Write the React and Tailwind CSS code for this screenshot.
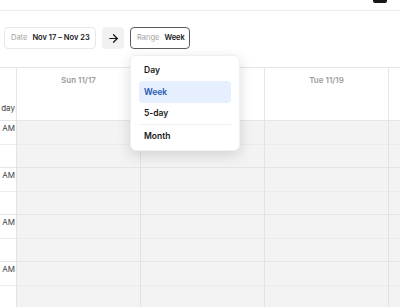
import {ArrowRight} from 'lucide-react';

const days = [
    {id: 'sun', label: 'Sun 11/17'},
    {id: 'mon', label: 'Mon 11/18'},
    {id: 'tue', label: 'Tue 11/19'},
    {id: 'wed', label: 'Wed 11/20'},
];

const hours = ['12 AM', '1 AM', '2 AM', '3 AM'];

const ranges = [
    {id: 'day', label: 'Day'},
    {id: 'week', label: 'Week'},
    {id: '5day', label: '5-day'},
    {id: 'month', label: 'Month'},
];

const App = () => {
    const active = 'week';

    return (
        <div className="relative w-[400px] h-[307px] overflow-hidden bg-white font-['Inter',sans-serif] text-neutral-900">
            <div className="h-[11px] flex justify-end pr-[13px] border-b border-[#ececec]">
                <div className="w-[14px] h-[3px] bg-neutral-900 rounded-b-[2px]"/>
            </div>

            <div className="flex items-center gap-[6px] px-[4px] pt-[16px]">
                <button className="h-[22px] w-[92px] flex items-center gap-[5px] px-[6px] border border-[#e7e7e7] rounded-[4px] text-[7.5px] whitespace-nowrap">
                    <span className="text-[#a3a3a3]">Date</span>
                    <span className="font-semibold text-neutral-900">Nov 17 – Nov 23</span>
                </button>
                <button className="h-[22px] w-[22px] flex items-center justify-center bg-[#f1f1f1] rounded-[4px]">
                    <ArrowRight className="w-[13px] h-[13px] text-neutral-900" strokeWidth={2.2}/>
                </button>
                <button className="h-[22px] w-[60px] flex items-center gap-[5px] px-[6px] border border-[#5c5c5c] rounded-[4px] text-[7.5px] whitespace-nowrap">
                    <span className="text-[#a3a3a3]">Range</span>
                    <span className="font-semibold text-neutral-900">Week</span>
                </button>
            </div>

            <div className="mt-[18px] border-t border-[#e6e6e6] flex h-[54px] border-b">
                <div className="w-[17px] shrink-0 border-r border-[#e6e6e6] flex items-end justify-end overflow-hidden pb-[7px] pr-[1px]">
                    <span className="text-[8px] leading-[10px] text-neutral-700 whitespace-nowrap">All day</span>
                </div>
                {days.map((d) => (
                    <div key={d.id} className="w-[124px] shrink-0 border-r border-[#e6e6e6] pt-[7px] text-center text-[8px] leading-[10px] font-semibold text-[#9c9c9c]">
                        {d.label}
                    </div>
                ))}
            </div>

            <div className="flex">
                <div className="w-[17px] shrink-0 bg-white border-r border-[#e3e3e3]">
                    {hours.map((h) => (
                        <div key={h}>
                            <div className="h-[23.5px] border-b border-[#ececec] flex justify-end overflow-hidden pt-[2px] pr-[1px]">
                                <span className="text-[8px] leading-[10px] text-neutral-700 whitespace-nowrap">{h}</span>
                            </div>
                            <div className="h-[23.5px] border-b border-[#e6e6e6]"/>
                        </div>
                    ))}
                </div>
                {days.map((d) => (
                    <div key={d.id} className="w-[124px] shrink-0 bg-[#f3f3f3] border-r border-[#e2e2e2]">
                        {hours.map((h) => (
                            <div key={h}>
                                <div className="h-[23.5px] border-b border-[#ebebeb]"/>
                                <div className="h-[23.5px] border-b border-[#e4e4e4]"/>
                            </div>
                        ))}
                    </div>
                ))}
            </div>

            <div className="absolute left-[130px] top-[55px] w-[110px] bg-white rounded-[6px] shadow-[0_4px_14px_rgba(0,0,0,0.14)] border border-[#f0f0f0] px-[8px] py-[3px]">
                {ranges.map((r, i) => (
                    <div
                        key={r.id}
                        className={`h-[22px] flex items-center px-[5px] text-[8.5px] font-semibold rounded-[4px] ${
                            r.id === active ? 'bg-[#e5efff] text-[#2456b0]' : 'text-neutral-900'
                        } ${i === 2 ? 'border-b border-[#efefef] rounded-none' : ''}`}
                    >
                        {r.label}
                    </div>
                ))}
            </div>
        </div>
    );
};

export default App;
